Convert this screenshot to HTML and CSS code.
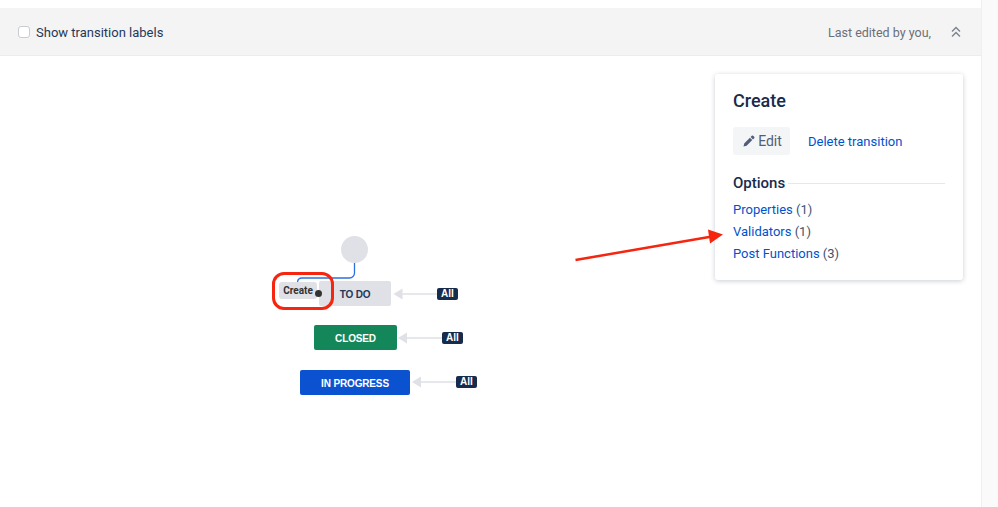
FILE: index.html
```html
<!DOCTYPE html>
<html lang="en">
<head>
<meta charset="utf-8">
<title>Workflow</title>
<link rel="stylesheet" href="styles.css">
</head>
<body>
<div class="page">
  <main class="main">
    <header class="toolbar">
      <label class="toggle"><span class="check"></span><span>Show transition labels</span></label>
      <div class="meta">
        <span>Last edited by you,</span>
        <svg class="collapse" width="10" height="12" viewBox="0 0 10 12" fill="none" stroke="#80858e" stroke-width="1.5"><path d="M1 5.500 5 1.500l4 4M1 10.500l4-4 4 4"/></svg>
      </div>
    </header>
    <section class="canvas">
      <svg class="wires" width="982" height="452" viewBox="0 56 982 452" fill="none">
        <path d="M354.500 262v11a5 5 0 0 1-5 5H302a4.500 4.500 0 0 0-4.500 4" stroke="#2f6fde" stroke-width="1.300"/>
        <path d="M437 294H402" stroke="#dfe1e6" stroke-width="1.500"/>
        <path d="M402.500 288.500v11L393.500 294z" fill="#dfe1e6"/>
        <path d="M442 338H407" stroke="#dfe1e6" stroke-width="1.500"/>
        <path d="M407 332.500v11L398 338z" fill="#dfe1e6"/>
        <path d="M456 382H421" stroke="#dfe1e6" stroke-width="1.500"/>
        <path d="M421 376.500v11L412 382z" fill="#dfe1e6"/>
      </svg>
      <div class="start"></div>
      <div class="status todo">TO DO</div>
      <div class="status closed">CLOSED</div>
      <div class="status progress">IN PROGRESS</div>
      <div class="all all-todo">All</div>
      <div class="all all-closed">All</div>
      <div class="all all-progress">All</div>
      <div class="create">Create</div>
      <div class="dot"></div>
      <div class="ring"></div>
      <aside class="popup">
        <h2 class="popup-title">Create</h2>
        <div class="actions">
          <button class="edit" type="button">
            <svg width="12" height="12" viewBox="0 0 12 12" fill="#505f79"><path d="M8.800.8a1 1 0 0 1 1.400 0l1 1a1 1 0 0 1 0 1.400L10 4.400 7.600 2zM6.900 2.700l2.400 2.400-5.700 5.700-3.100.8.700-3.100z"/></svg>
            <span>Edit</span>
          </button>
          <a class="link" href="#">Delete transition</a>
        </div>
        <div class="options-head"><h3>Options</h3><span class="rule"></span></div>
        <ul class="options">
          <li><a class="link" href="#">Properties</a> (1)</li>
          <li><a class="link" href="#">Validators</a> (1)</li>
          <li><a class="link" href="#">Post Functions</a> (3)</li>
        </ul>
      </aside>
      <svg class="arrow" width="160" height="50" viewBox="570 220 160 50" fill="none">
        <path d="M575.500 260 712 236.500" stroke="#f5250f" stroke-width="2.500"/>
        <path d="M708 229.500 723 234.500l-13 9z" fill="#f5250f"/>
      </svg>
    </section>
  </main>
  <div class="side"></div>
</div>
</body>
</html>
```
FILE: styles.css
```css
* { box-sizing: border-box; }
html, body { margin: 0; height: 100%; overflow: hidden; }
body {
  background: #fff;
  color: #172b4d;
  font-family: Roboto, Arial, sans-serif;
  font-size: 14px;
}
.page { display: flex; height: 507px; }
.main {
  width: 982px;
  padding-top: 8px;
  display: flex;
  flex-direction: column;
  border-right: 1px solid #f0f0f2;
}
.side { flex: 1; background: #fafafa; }
.toolbar {
  height: 48px;
  background: #f4f4f5;
  border-bottom: 1px solid #ebecee;
  padding: 1px 20px 0 18px;
  display: flex;
  align-items: center;
  justify-content: space-between;
}
.toggle { display: flex; align-items: center; gap: 6px; color: #253858; font-size: 13px; }
.check {
  width: 10px;
  height: 10px;
  background: #fff;
  border: 1px solid #c9ccd2;
  border-radius: 3px;
  box-sizing: content-box;
}
.meta { display: flex; align-items: center; gap: 20px; color: #6b6f76; font-size: 12.500px; }
.collapse { display: block; }
.canvas { position: relative; flex: 1; }
.wires { position: absolute; left: 0; top: 0; }
.start {
  position: absolute;
  left: 341px;
  top: 180px;
  width: 27px;
  height: 27px;
  border-radius: 50%;
  background: #dfe1e6;
}
.status {
  position: absolute;
  height: 25px;
  padding-top: 1px;
  border-radius: 2px;
  display: flex;
  align-items: center;
  justify-content: center;
  font-family: "Liberation Sans", Arial, sans-serif;
  font-size: 10px;
  letter-spacing: -.15px;
  font-weight: 700;
  color: #fff;
}
.todo { left: 319px; top: 225px; width: 72px; background: #dfe1e6; color: #253858; }
.closed { left: 314px; top: 269px; width: 83px; background: #14875a; }
.progress { left: 300px; top: 314px; width: 110px; background: #0b52d1; }
.all {
  position: absolute;
  width: 21px;
  height: 12px;
  border-radius: 2px;
  background: #172b4d;
  color: #fff;
  font-family: "Liberation Sans", Arial, sans-serif;
  font-size: 10px;
  font-weight: 700;
  line-height: 12px;
  text-align: center;
}
.all-todo { left: 437px; top: 232px; }
.all-closed { left: 442px; top: 276px; }
.all-progress { left: 456px; top: 320px; }
.create {
  position: absolute;
  left: 279px;
  top: 226px;
  width: 38px;
  height: 17px;
  border-radius: 3px;
  background: #dfe1e6;
  color: #333;
  font-size: 10px;
  font-weight: 700;
  line-height: 17px;
  text-align: center;
}
.dot {
  position: absolute;
  left: 315px;
  top: 234px;
  width: 7px;
  height: 7px;
  border-radius: 50%;
  background: #333;
}
.ring {
  position: absolute;
  left: 272px;
  top: 216px;
  width: 62px;
  height: 38px;
  border: 3px solid #f5250f;
  border-radius: 12px;
}
.arrow { position: absolute; left: 570px; top: 164px; }
.popup {
  position: absolute;
  left: 715px;
  top: 18px;
  width: 248px;
  height: 206px;
  padding: 17px 18px 0;
  background: #fff;
  border-radius: 3px;
  box-shadow: 0 1px 5px rgba(9, 30, 66, .22);
  font-size: 13px;
}
.popup-title { margin: 0; font-size: 18px; line-height: 20px; font-weight: 500; color: #172b4d; }
.actions { margin-top: 16px; display: flex; align-items: center; gap: 18px; }
.edit {
  width: 57px;
  height: 28px;
  padding: 0 0 0 2px;
  border: 0;
  border-radius: 3px;
  background: #f4f5f7;
  color: #505f79;
  font: inherit;
  font-size: 14px;
  display: flex;
  align-items: center;
  justify-content: center;
  gap: 3px;
}
.link { color: #0052cc; text-decoration: none; }
.options-head { margin-top: 19px; display: flex; align-items: center; gap: 3px; }
.options-head h3 { margin: 0; font-size: 15px; line-height: 18px; font-weight: 500; color: #172b4d; }
.rule { flex: 1; height: 1px; background: #e6e8ec; }
.options { list-style: none; margin: 7px 0 0; padding: 0; color: #42526e; }
.options li { height: 22px; line-height: 22px; }
```
